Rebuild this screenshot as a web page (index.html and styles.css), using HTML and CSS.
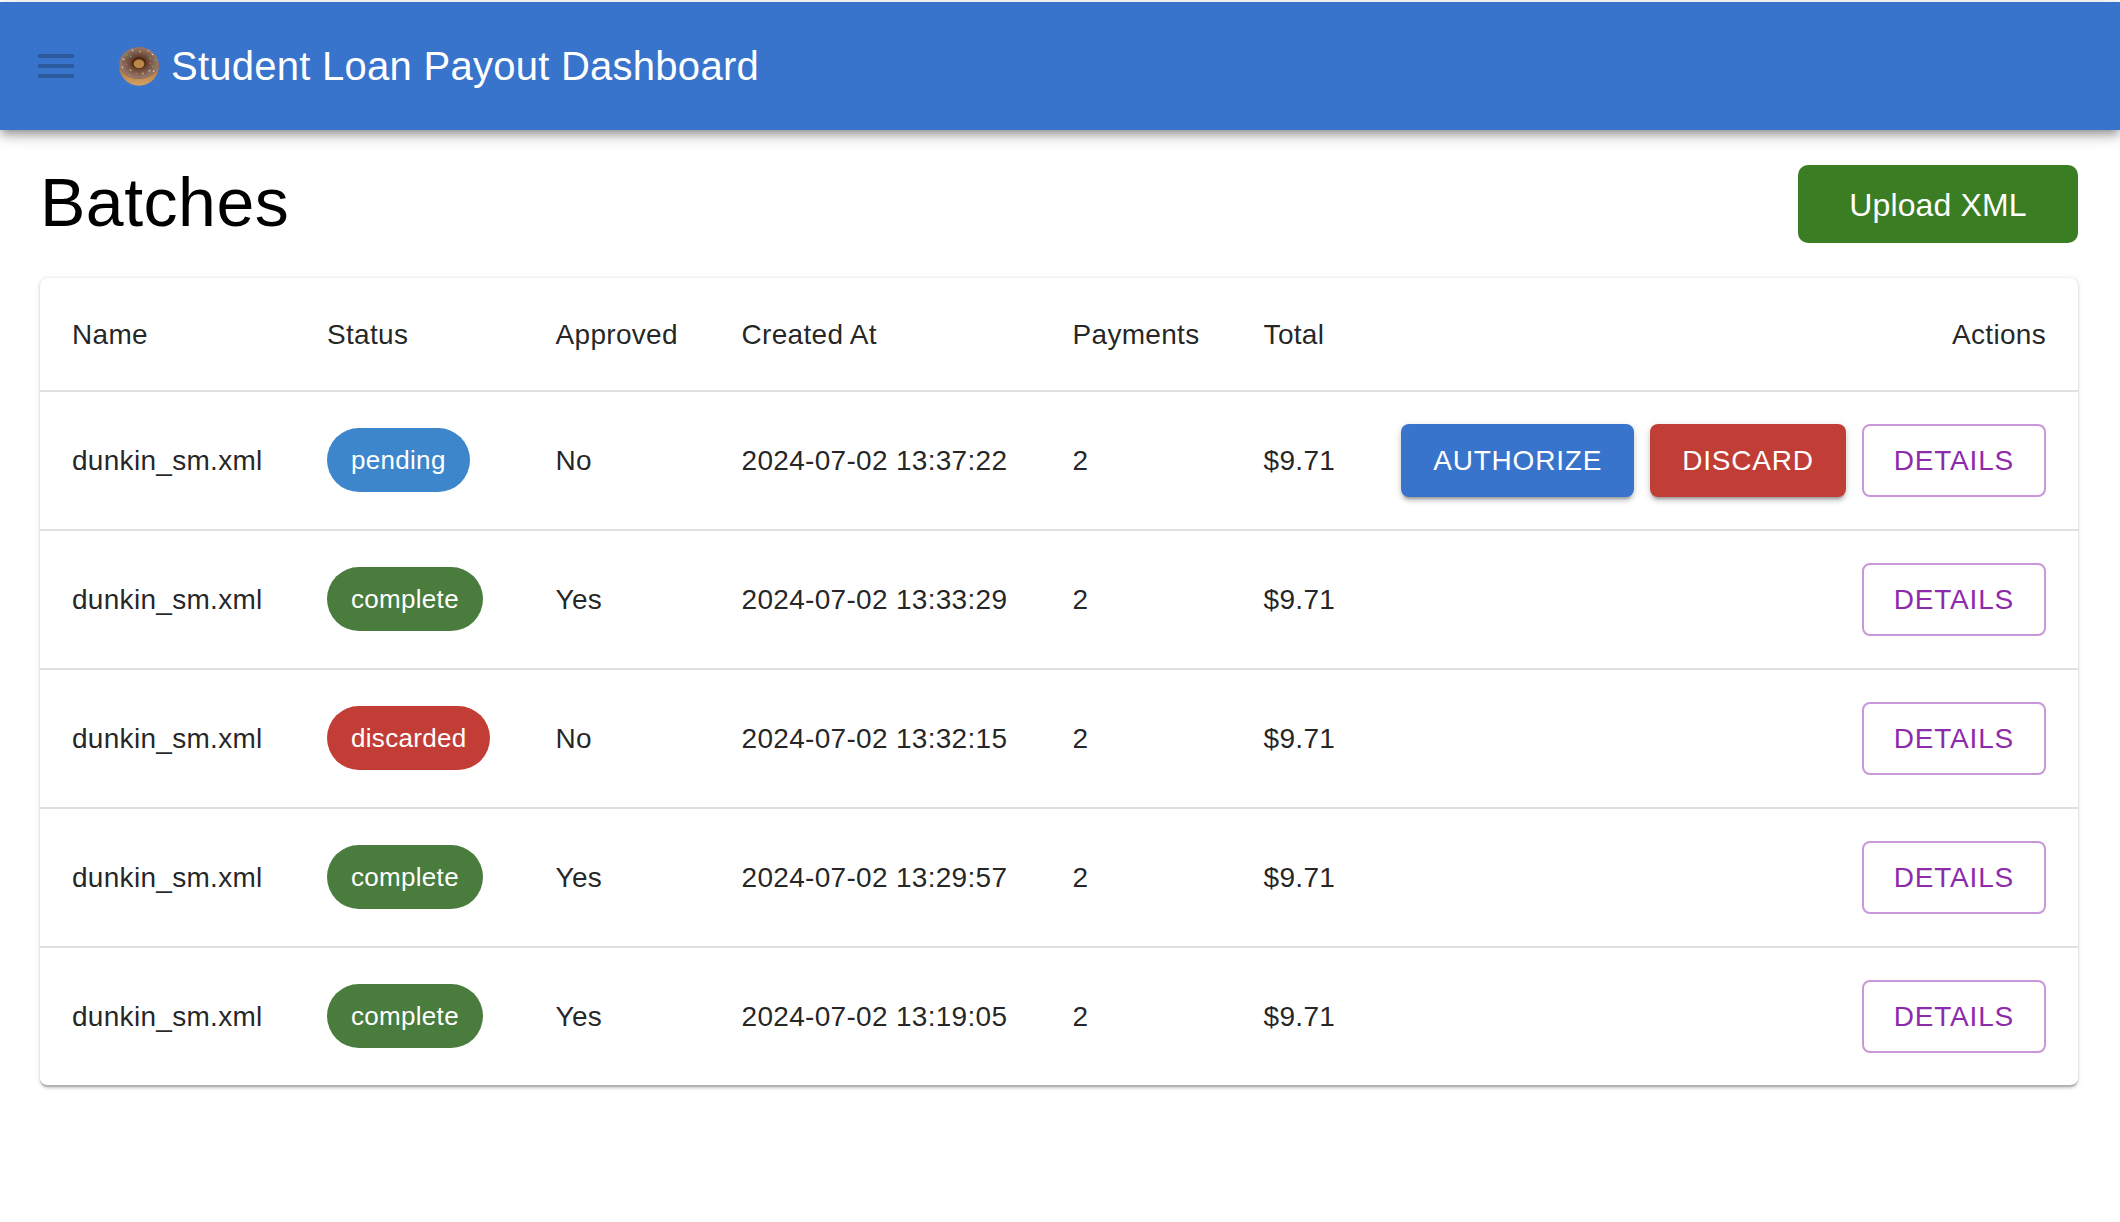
FILE: index.html
```html
<!DOCTYPE html>
<html lang="en">
<head>
<meta charset="utf-8">
<title>Student Loan Payout Dashboard</title>
<link rel="stylesheet" href="styles.css">
</head>
<body>
<header class="appbar">
  <button class="menu-btn" aria-label="menu">
    <svg class="menu-icon" viewBox="0 0 36 24"><rect y="0" width="36" height="4"/><rect y="10" width="36" height="4"/><rect y="20" width="36" height="4"/></svg>
  </button>
  <svg class="donut" viewBox="0 0 40 40" aria-hidden="true">
    <defs>
      <radialGradient id="icing" cx="50%" cy="48%" r="56%">
        <stop offset="0.25" stop-color="#5a3424"/>
        <stop offset="0.5" stop-color="#75523f"/>
        <stop offset="0.85" stop-color="#96776a"/>
        <stop offset="1" stop-color="#7a5444"/>
      </radialGradient>
      <linearGradient id="base" x1="0" y1="0" x2="0" y2="1">
        <stop offset="0.5" stop-color="#a8703a"/>
        <stop offset="1" stop-color="#d6a262"/>
      </linearGradient>
    </defs>
    <ellipse cx="20" cy="20.5" rx="19.8" ry="19.2" fill="url(#base)"/>
    <ellipse cx="20" cy="17.2" rx="19.6" ry="15.8" fill="url(#icing)"/>
    <ellipse cx="20" cy="16.7" rx="7" ry="6" fill="#4f2812"/>
    <ellipse cx="20" cy="17.8" rx="5.4" ry="4.4" fill="#bb8746"/>
    <g stroke-width="0.9" stroke-linecap="round">
      <path d="M7 8l1 1" stroke="#5ed06a"/><path d="M13 4l1 .5" stroke="#fff"/><path d="M21 5v1" stroke="#f4e27a"/>
      <path d="M29 5l1-.5" stroke="#f2b5c8"/><path d="M33 8l.8.8" stroke="#ffffff"/><path d="M11 10l1 .6" stroke="#58b6e8"/>
      <path d="M31 12l.5 1" stroke="#5ed06a"/><path d="M36 14l-.8.6" stroke="#58b6e8"/><path d="M4 13l1 .4" stroke="#fff"/>
      <path d="M7 18l1 .7" stroke="#e46a8c"/><path d="M3 21l.9.5" stroke="#fff"/><path d="M11 24l1 .3" stroke="#f4e27a"/>
      <path d="M17 27l.6.8" stroke="#e46a8c"/><path d="M24 27v1" stroke="#f4e27a"/><path d="M30 25l.9-.4" stroke="#fff"/>
      <path d="M33 20l.9.5" stroke="#5ed06a"/><path d="M35 25l-.8.5" stroke="#fff"/><path d="M10 29l1 .4" stroke="#e46a8c"/>
      <path d="M31 17l.8.3" stroke="#e46a8c"/>
    </g>
  </svg>
  <h1 class="app-title">Student Loan Payout Dashboard</h1>
</header>
<main class="content">
  <div class="page-head">
    <h2 class="page-title">Batches</h2>
    <button class="upload-btn">Upload XML</button>
  </div>
  <section class="card">
    <table class="batches">
      <colgroup>
        <col class="col-name"><col class="col-status"><col class="col-approved"><col class="col-created"><col class="col-payments"><col class="col-total"><col>
      </colgroup>
      <thead>
        <tr><th>Name</th><th>Status</th><th>Approved</th><th>Created At</th><th>Payments</th><th>Total</th><th class="actions">Actions</th></tr>
      </thead>
      <tbody>
        <tr>
          <td>dunkin_sm.xml</td><td><span class="chip chip-pending">pending</span></td><td>No</td><td>2024-07-02 13:37:22</td><td>2</td><td>$9.71</td>
          <td class="actions"><div class="action-group"><button class="btn btn-blue">Authorize</button><button class="btn btn-red">Discard</button><button class="btn btn-outline">Details</button></div></td>
        </tr>
        <tr>
          <td>dunkin_sm.xml</td><td><span class="chip chip-complete">complete</span></td><td>Yes</td><td>2024-07-02 13:33:29</td><td>2</td><td>$9.71</td>
          <td class="actions"><div class="action-group"><button class="btn btn-outline">Details</button></div></td>
        </tr>
        <tr>
          <td>dunkin_sm.xml</td><td><span class="chip chip-discarded">discarded</span></td><td>No</td><td>2024-07-02 13:32:15</td><td>2</td><td>$9.71</td>
          <td class="actions"><div class="action-group"><button class="btn btn-outline">Details</button></div></td>
        </tr>
        <tr>
          <td>dunkin_sm.xml</td><td><span class="chip chip-complete">complete</span></td><td>Yes</td><td>2024-07-02 13:29:57</td><td>2</td><td>$9.71</td>
          <td class="actions"><div class="action-group"><button class="btn btn-outline">Details</button></div></td>
        </tr>
        <tr>
          <td>dunkin_sm.xml</td><td><span class="chip chip-complete">complete</span></td><td>Yes</td><td>2024-07-02 13:19:05</td><td>2</td><td>$9.71</td>
          <td class="actions"><div class="action-group"><button class="btn btn-outline">Details</button></div></td>
        </tr>
      </tbody>
    </table>
  </section>
</main>
</body>
</html>
```
FILE: styles.css
```css
* { box-sizing: border-box; }
html, body { margin: 0; padding: 0; background: #fff; }
body {
  padding-top: 2px;
  font-family: "Liberation Sans", Arial, sans-serif;
  color: rgba(0, 0, 0, 0.87);
}
button { font-family: inherit; cursor: pointer; }

.appbar {
  height: 128px;
  background: #3874cb;
  display: flex;
  align-items: center;
  padding-left: 38px;
  color: #fff;
  box-shadow: 0 4px 8px -2px rgba(0,0,0,.3), 0 8px 10px 0 rgba(0,0,0,.14), 0 2px 20px 0 rgba(0,0,0,.12);
  position: relative;
}
.menu-btn { border: 0; background: none; padding: 0; width: 36px; height: 24px; margin-right: 45px; display: block; }
.menu-icon { display: block; width: 36px; height: 24px; fill: #2c5a9e; }
.donut { width: 40px; height: 40px; margin-right: 12px; flex: none; }
.app-title { margin: 0; font-size: 40px; font-weight: 400; letter-spacing: 0.26px; line-height: 1.6; }

.content { padding: 0 42px 40px 40px; }
.page-head { display: flex; justify-content: space-between; align-items: center; height: 148px; }
.page-title { margin: 0 0 2px; font-size: 68px; font-weight: 400; line-height: 1.235; letter-spacing: 0.5px; color: #000; }
.upload-btn {
  width: 280px; height: 78px;
  padding: 2px 0 0;
  background: #3b7d23; color: #fff;
  border: 0; border-radius: 10px;
  font-size: 32px; letter-spacing: 0.15px;
}

.card {
  background: #fff;
  border-radius: 8px;
  border-bottom: 2px solid #b4b4b4;
  box-shadow: 0 1px 3px 0 rgba(0,0,0,.18), 0 0 6px 0 rgba(0,0,0,.08);
}
.batches { width: 100%; border-collapse: collapse; table-layout: fixed; font-size: 28px; letter-spacing: 0.3px; }
.col-name { width: 255px; }
.col-status { width: 228.6px; }
.col-approved { width: 186px; }
.col-created { width: 331px; }
.col-payments { width: 191px; }
.col-total { width: 138px; }
.batches th, .batches td {
  padding: 0 0 0 32px;
  text-align: left;
  font-weight: 400;
  border-bottom: 2px solid #e0e0e0;
  white-space: nowrap;
  color: rgba(0, 0, 0, 0.87);
}
.batches th { height: 113px; padding-top: 2px; }
.batches td { height: 139px; }
.batches tbody tr:last-child td { border-bottom: 0; height: 138px; }
.batches .actions { text-align: right; padding: 0 32px 0 0; }
.batches th.actions { padding-top: 2px; }
.action-group { display: flex; justify-content: flex-end; gap: 16px; }

.chip {
  display: inline-flex; align-items: center;
  height: 64px; padding: 2px 24px 0;
  border-radius: 32px;
  color: #fff; font-size: 26px; letter-spacing: 0.3px;
  vertical-align: middle;
  margin-bottom: 2px;
}
.chip-pending { background: #3d86cb; }
.chip-complete { background: #497c3d; }
.chip-discarded { background: #c23d35; }

.btn {
  height: 73px; padding: 0 32px;
  border: 0; border-radius: 8px;
  font-size: 28px; letter-spacing: 0.8px;
  text-transform: uppercase;
  color: #fff;
}
.btn-blue { background: #3874cb; box-shadow: 0 4px 2px -2px rgba(0,0,0,.2), 0 4px 4px 0 rgba(0,0,0,.14), 0 2px 10px 0 rgba(0,0,0,.12); }
.btn-red { background: #c13e36; box-shadow: 0 4px 2px -2px rgba(0,0,0,.2), 0 4px 4px 0 rgba(0,0,0,.14), 0 2px 10px 0 rgba(0,0,0,.12); }
.btn-outline { background: #fff; color: #8e2bab; border: 2px solid #c997da; padding: 0 30px; }
```
